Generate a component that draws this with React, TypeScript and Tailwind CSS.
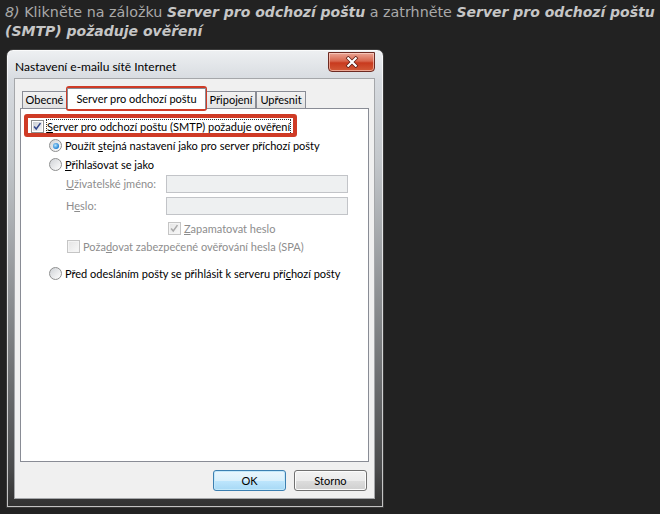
import React from "react";

const ui = "font-['Lato',sans-serif] text-[11px] leading-[14px]";

function CheckBox({ checked, disabled }: { checked?: boolean; disabled?: boolean }) {
  return (
    <span
      className={`relative flex h-[13px] w-[13px] shrink-0 items-center justify-center border ${
        disabled ? "border-[#c5c5c5] bg-[#f4f4f4]" : "border-[#8e8f8f] bg-white"
      }`}
    >
      <span
        className={`h-[9px] w-[9px] ${
          disabled
            ? "bg-[linear-gradient(135deg,#e6e6e6,#f7f7f7)]"
            : "bg-[linear-gradient(135deg,#cbcfd5,#f6f6f6)]"
        }`}
      />
      {checked && (
        <svg viewBox="0 0 13 13" className="absolute left-0 top-0 h-[11px] w-[11px]">
          <path
            d="M2.5 6.5 L5 9.5 L10 2.5"
            fill="none"
            stroke={disabled ? "#a9a9a9" : "#31458a"}
            strokeWidth="1.8"
          />
        </svg>
      )}
    </span>
  );
}

function Radio({ checked }: { checked?: boolean }) {
  return (
    <span className="flex h-[13px] w-[13px] shrink-0 items-center justify-center rounded-full border border-[#8e8f8f] bg-[linear-gradient(135deg,#cfd2d6,#ffffff)]">
      {checked && (
        <span className="h-[6px] w-[6px] rounded-full bg-[radial-gradient(circle_at_40%_40%,#b7e4fb,#1b7ed4_70%,#0d5ea8)]" />
      )}
    </span>
  );
}

function Tab({ label, width, selected }: { label: string; width: string; selected?: boolean }) {
  return (
    <div
      className={`flex items-center justify-center whitespace-nowrap border border-b-0 border-[#898c95] ${width} ${
        selected
          ? "relative z-10 mb-[-1px] h-[21px] bg-white"
          : "h-[17px] bg-[linear-gradient(#f2f2f2,#e2e2e2)]"
      }`}
    >
      {label}
    </div>
  );
}

function Button({ label, primary }: { label: string; primary?: boolean }) {
  return (
    <div
      className={`flex h-[21px] w-[73px] items-center justify-center rounded-[3px] border ${
        primary
          ? "border-[#3c7fb1] bg-[linear-gradient(#eaf6fd_0%,#d9f0fc_50%,#bee6fd_50%,#a7d9f5_100%)] shadow-[inset_0_0_0_1px_#c3e8fa]"
          : "border-[#707070] bg-[linear-gradient(#f2f2f2_0%,#ebebeb_50%,#dddddd_50%,#cfcfcf_100%)] shadow-[inset_0_0_0_1px_#fcfcfc]"
      }`}
    >
      {label}
    </div>
  );
}

export default function App() {
  const bi = "font-bold italic text-[14px] text-[#c6c6c6]";
  return (
    <div className="h-[514px] w-[660px] overflow-hidden bg-[#222222]">
      <p className="whitespace-nowrap pl-[5px] pt-[3px] font-['DejaVu_Sans',sans-serif] text-[14.3px] leading-[19px] text-[#a9a9a9]">
        <i>8)</i> Klikněte na záložku <span className={bi}>Server pro odchozí poštu</span> a zatrhněte{" "}
        <span className={bi}>Server pro odchozí poštu</span>
        <br />
        <span className={bi}>(SMTP) požaduje ověření</span>
      </p>

      <div className="ml-[6px] mt-[8px] h-[459px] w-[378px] rounded-t-[7px] border border-[#3a3a3a] bg-[linear-gradient(180deg,#eef0f2_0px,#d7dbe0_30px,#c3c7cb_110px,#8b8e91_250px,#4a4b4c_420px,#2f2f2f_459px)] shadow-[inset_0_0_0_1px_rgba(255,255,255,0.7)]">
        <div className="flex h-[28px] items-start justify-between">
          <span className="ml-[8px] mt-[9px] font-['Lato',sans-serif] text-[12px] leading-[15px] text-black">
            Nastavení e-mailu sítě Internet
          </span>
          <div className="mr-[8px] mt-[2px] flex h-[20px] w-[47px] items-center justify-center rounded-b-[4px] border border-[#6d2a22] bg-[linear-gradient(#eaa595_0%,#d8664d_45%,#c83a1e_55%,#d35a38_100%)] shadow-[inset_0_0_0_1px_rgba(255,220,210,0.6)]">
            <svg viewBox="0 0 14 12" className="h-[12px] w-[14px]">
              <path d="M2 1 L12 11 M12 1 L2 11" stroke="#5a1b12" strokeWidth="3.6" />
              <path d="M2.5 1.5 L11.5 10.5 M11.5 1.5 L2.5 10.5" stroke="#ffffff" strokeWidth="2.2" />
            </svg>
          </div>
        </div>

        <div className={`${ui} relative ml-[7px] h-[421px] w-[361px] border border-[#a5a7aa] bg-[#f0f0f0] text-black`}>
          {/* tabs */}
          <div className="ml-[7px] mt-[9px] flex h-[20px] items-end">
            <Tab label="Obecné" width="w-[45px]" />
            <Tab label="Server pro odchozí poštu" width="w-[139px]" selected />
            <Tab label="Připojení" width="w-[50px]" />
            <Tab label="Upřesnit" width="w-[50px]" />
          </div>

          {/* panel */}
          <div className="ml-[5px] h-[354px] w-[349px] whitespace-nowrap border border-[#898c95] bg-white pt-[11px]">
            <div className="ml-[10px] flex h-[13px] items-center gap-[3px]">
              <CheckBox checked />
              <span className="outline-1 outline-dotted outline-[#333]">
                <u>S</u>erver pro odchozí poštu (SMTP) požaduje ověření
              </span>
            </div>
            <div className="ml-[28px] mt-[6px] flex h-[13px] items-center gap-[3px]">
              <Radio checked />
              <span>
                Použít <u>s</u>tejná nastavení jako pro server příchozí pošty
              </span>
            </div>
            <div className="ml-[28px] mt-[6px] flex h-[13px] items-center gap-[3px]">
              <Radio />
              <span>
                <u>P</u>řihlašovat se jako
              </span>
            </div>
            <div className="ml-[45px] mt-[4px] flex h-[18px] items-center text-[#8d8d8d]">
              <span className="w-[100px]">
                <u>U</u>živatelské jméno:
              </span>
              <span className="h-[18px] w-[182px] border border-[#c2c4c8] bg-[#eef0f1]" />
            </div>
            <div className="ml-[45px] mt-[4px] flex h-[18px] items-center text-[#8d8d8d]">
              <span className="w-[100px]">
                H<u>e</u>slo:
              </span>
              <span className="h-[18px] w-[182px] border border-[#c2c4c8] bg-[#eef0f1]" />
            </div>
            <div className="ml-[147px] mt-[7px] flex h-[13px] items-center gap-[3px] text-[#8d8d8d]">
              <CheckBox checked disabled />
              <span>
                <u>Z</u>apamatovat heslo
              </span>
            </div>
            <div className="ml-[46px] mt-[5px] flex h-[13px] items-center gap-[3px] text-[#8d8d8d]">
              <CheckBox disabled />
              <span>
                Poža<u>d</u>ovat zabezpečené ověřování hesla (SPA)
              </span>
            </div>
            <div className="ml-[28px] mt-[14px] flex h-[13px] items-center gap-[3px]">
              <Radio />
              <span>
                Před odesláním pošty se přihlásit k serveru pří<u>c</u>hozí pošty
              </span>
            </div>
          </div>

          <div className="mr-[7px] mt-[8px] flex justify-end gap-[8px]">
            <Button label="OK" primary />
            <Button label="Storno" />
          </div>

          {/* red annotation boxes */}
          <div className="absolute left-[51px] top-[7px] h-[25px] w-[141px] rounded-[3px] border-[4px] border-[#cf3b26]" />
          <div className="absolute left-[9px] top-[35px] h-[23px] w-[273px] rounded-[3px] border-[4px] border-[#cf3b26]" />
        </div>
      </div>
    </div>
  );
}
